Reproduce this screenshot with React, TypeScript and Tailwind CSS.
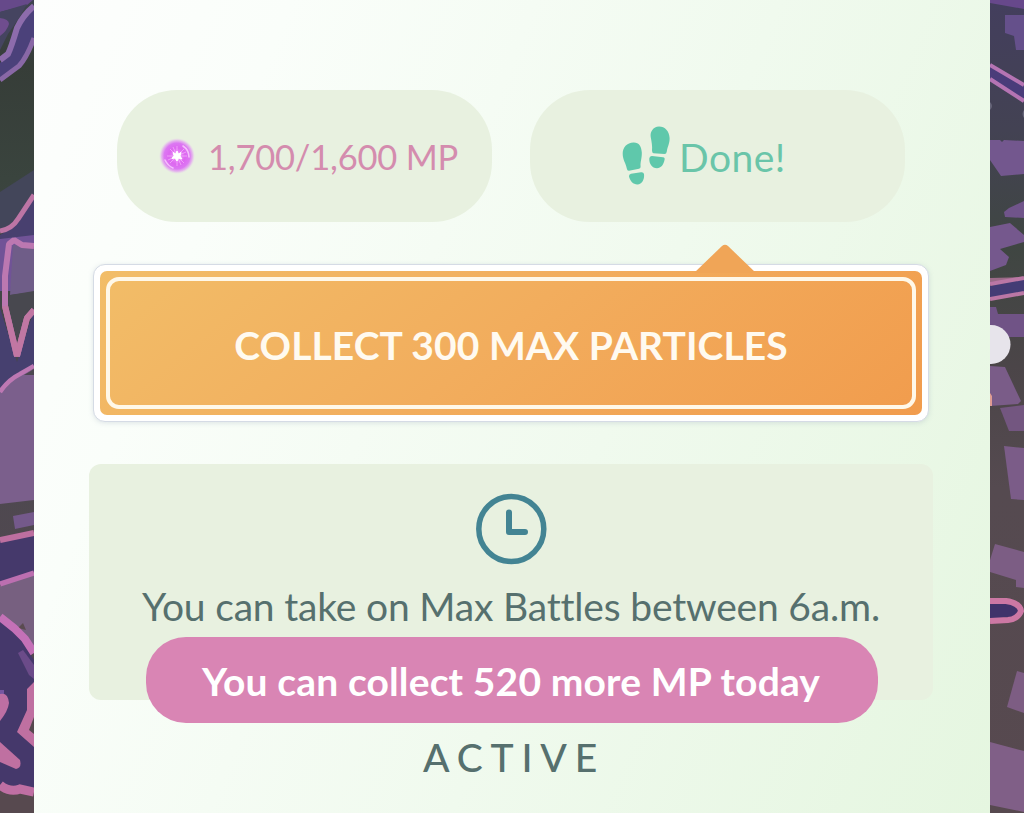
function MapLeft() {
  return (
    <svg className="h-full w-[34px] shrink-0" viewBox="0 0 34 813" preserveAspectRatio="none">
      <defs>
        <linearGradient id="ground" x1="0" y1="0" x2="0" y2="1">
          <stop offset="0" stopColor="#3f4450" />
          <stop offset="0.08" stopColor="#363d38" />
          <stop offset="0.22" stopColor="#3a443e" />
          <stop offset="0.5" stopColor="#4c4850" />
          <stop offset="1" stopColor="#57494f" />
        </linearGradient>
      </defs>
      <rect width="34" height="813" fill="url(#ground)" />
      <path d="M0 0H33L27 5L0 12Z" fill="#66498a" />
      <path d="M0 12L27 4L19 18L8 34L0 50Z" fill="#454460" />
      <path d="M0 18Q9 19 9 24Q7 31 0 36Z" fill="#6f4d8e" />
      <path d="M34 8L20 24L12 48L0 63V79L16 69L27 56L34 40Z" fill="#4b417a" />
      <path d="M34 6Q23 15 17 28Q11 48 8 54L0 60" fill="none" stroke="#8d6cac" strokeWidth="6" />
      <path d="M34 38Q27 57 19 66L0 80" fill="none" stroke="#8968a6" strokeWidth="5" />
      <path d="M0 192L34 170V200L10 232H0Z" fill="#43465a" />
      <path d="M34 198L12 228L0 235V245H34Z" fill="#48406f" />
      <path d="M34 195L18 219Q12 229 0 231" fill="none" stroke="#bd75a5" strokeWidth="5" />
      <path d="M0 239L34 235V291H0Z" fill="#715397" />
      <path d="M13 245H34V292L10 295Z" fill="#6f5d88" />
      <path d="M0 308L17 362L34 310V367L0 390Z" fill="#46406f" />
      <path d="M10 295L34 291V310L27 319L18 350L7 308Z" fill="#48484f" />
      <path d="M34 246L22 245L14 240L9 244L5 276L5 306L17 356L27 318L34 310" fill="none" stroke="#bc78b1" strokeWidth="6" strokeLinejoin="bevel" />
      <path d="M5 306L17 356L27 318L34 310" fill="none" stroke="#c177a3" strokeWidth="6" strokeLinejoin="bevel" />
      <path d="M0 390L14 377L34 369V500L0 504Z" fill="#7b5f8c" />
      <path d="M24 375L34 369V375Z" fill="#4c4850" />
      <path d="M0 392Q8 380 20 374L34 366" fill="none" stroke="#bd78b3" strokeWidth="4.5" />
      <path d="M13 516L34 512V525L15 529Z" fill="#74598b" />
      <path d="M0 541L34 533V572L0 584Z" fill="#45396b" />
      <path d="M0 540L34 533" stroke="#bd6fa0" strokeWidth="6" />
      <path d="M0 586L34 574V650L0 618Z" fill="#776080" />
      <path d="M18 628L23 623L26 630Z" fill="#5a4b50" />
      <path d="M0 620L18 635L34 660V789L0 784Z" fill="#45386b" />
      <path d="M0 584L34 573" stroke="#bc6fb0" strokeWidth="5" />
      <path d="M0 617L14 628L25 639L34 653" fill="none" stroke="#c471b7" strokeWidth="8" />
      <path d="M18 653L23 650L34 665V679L29 675Z" fill="#6b4b89" />
      <path d="M0 690H4V696H0Z" fill="#7556a1" />
      <path d="M0 694Q8 692 9 703Q8 711 0 721Z" fill="#bd6fa3" />
      <path d="M34 682L27 689V710L17 732L34 747Z" fill="#bf70a1" />
      <path d="M34 717L29 730L34 734Z" fill="#57494f" />
      <path d="M0 742L20 760Q22 768 16 769L0 762Z" fill="#bf70a1" />
      <path d="M0 791H34V813H0Z" fill="#57494f" />
      <path d="M0 785Q10 793 20 789L34 792" fill="none" stroke="#bf6fa3" strokeWidth="9" />
    </svg>
  );
}

function MapRight() {
  return (
    <svg className="h-full w-[34px] shrink-0" viewBox="0 0 34 813" preserveAspectRatio="none">
      <defs>
        <linearGradient id="soil" x1="0" y1="0" x2="0" y2="1">
          <stop offset="0" stopColor="#433e5d" />
          <stop offset="0.16" stopColor="#434253" />
          <stop offset="0.3" stopColor="#3f4642" />
          <stop offset="0.45" stopColor="#4b4548" />
          <stop offset="0.6" stopColor="#554a50" />
          <stop offset="1" stopColor="#57494f" />
        </linearGradient>
      </defs>
      <rect width="34" height="813" fill="url(#soil)" />
      <path d="M0 0H34V9L0 3Z" fill="#67488b" />
      <path d="M15 15H34V50H26L24 36L15 33Z" fill="#65508b" />
      <path d="M0 64L34 86V100L0 80Z" fill="#4a3c7a" />
      <path d="M0 65L34 85M0 79L34 101" stroke="#b574b3" strokeWidth="4" />
      <path d="M0 102Q4 106 0 110ZM34 110Q31 114 34 118Z" fill="#666579" />
      <path d="M0 140H10L12 142L14 140L34 141V174L11 176L0 160Z" fill="#73578e" />
      <path d="M14 212L19 208L34 201V218L15 217Z" fill="#70548a" />
      <path d="M0 227L20 223L34 235V242L10 249L19 257L16 265L0 271Z" fill="#75588d" />
      <path d="M0 278L34 277V281L0 282Z" fill="#9a6a87" />
      <path d="M0 286L34 279V294L0 299Z" fill="#443c75" />
      <path d="M0 284L34 278M0 299L34 293" stroke="#bb77a5" strokeWidth="4" />
      <path d="M0 307H6L8 314H34V337H0Z" fill="#705386" />
      <circle cx="1" cy="344.5" r="19.5" fill="#e7e4eb" />
      <path d="M0 366L15 367L31 401L28 404L0 406Z" fill="#7a5c88" />
      <path d="M0 393L2 396V406H0Z" fill="#df9c93" />
      <path d="M10 408L34 405V431H19Z" fill="#735680" />
      <path d="M14 446L34 448V500L21 499Z" fill="#7b5c88" />
      <path d="M5 544L34 552V588L26 587V580L0 572V560Z" fill="#7c5d84" />
      <path d="M0 601H16Q29 603 28 611Q28 617 20 617L0 619Z" fill="#3f336a" />
      <path d="M0 601H16Q30 603 31 611Q28 619 18 620L0 621" fill="none" stroke="#cc78a4" strokeWidth="6" />
      <path d="M27 671L34 673V713L17 707Z" fill="#7d5d83" />
      <path d="M0 742L34 751V812L0 805Z" fill="#805f87" />
    </svg>
  );
}

function ParticleIcon() {
  return (
    <svg className="size-9 shrink-0" viewBox="0 0 36 36">
      <defs>
        <radialGradient id="orb">
          <stop offset="0" stopColor="#ef9dfb" />
          <stop offset="0.45" stopColor="#dd67f0" />
          <stop offset="0.72" stopColor="#dc78f2" />
          <stop offset="0.86" stopColor="#e3a3f0" stopOpacity="0.75" />
          <stop offset="1" stopColor="#e8d0ec" stopOpacity="0" />
        </radialGradient>
      </defs>
      <circle cx="18" cy="18" r="18" fill="url(#orb)" />
      <path d="M18 8V28M8 18H28M11 11L25 25M25 11L11 25M14 9L22 27M27 14L9 22" stroke="#f3acfa" strokeWidth="0.8" />
      <path d="M24 8Q30 12 30 19M6 22Q9 28 14 30" fill="none" stroke="#f5bffb" strokeWidth="1.6" strokeLinecap="round" />
      <path d="M18 13L19.500 16L22 14.500L21 18L23 21L19.500 20L18 23L16 20L13 20.500L15 17.500L14 14.500L17 16Z" fill="#fff" stroke="#fff" strokeWidth="1" />
    </svg>
  );
}

function Footprints() {
  return (
    <svg className="h-[60px] w-12 shrink-0" viewBox="0 0 48 60" fill="#5fc8ab">
      <path d="M37 0.500C31 1 28 5.500 28.700 11C29.600 16 30.500 20 30 24.500Q30 27 31.500 27.200L42.500 28Q44.500 28 44.800 25.500C45.500 20.500 47.800 17.500 47.600 12C47.200 5 43 0.500 37 0.500Z" />
      <path d="M30 30L41 31.200Q43.200 31.500 42.500 34C41.500 39 39 42 35 42.300C30 42.200 27 37.500 27.300 32.500Q27.500 29.800 30 30Z" />
      <path d="M11.500 16.500C5 16.500 0.500 21.500 0.700 28C0.800 34 4 37.500 4.800 42.500Q5.200 45 7 44.800L17 42.800Q18.800 42.500 18.600 40.500C18.200 35.500 20 32.500 19.800 26.500C19.500 20.500 17 16.300 11.500 16.500Z" />
      <path d="M9 47.800L19 46.200Q21.500 45.800 22 48C22.700 53.500 20 58 15.500 58.500C11.500 58.700 8 55 7 50.500Q6.700 48.200 9 47.800Z" />
    </svg>
  );
}

function ClockIcon() {
  return (
    <svg className="size-[72px]" viewBox="0 0 72 72" fill="none" stroke="#438493">
      <circle cx="36.300" cy="36" r="32.500" strokeWidth="5.500" />
      <path d="M34 19.500V39H50" strokeWidth="6" strokeLinecap="round" strokeLinejoin="round" />
    </svg>
  );
}

export default function App() {
  return (
    <div className="flex h-[813px] w-[1024px] overflow-hidden font-['Lato',sans-serif]">
      <MapLeft />
      <main className="flex w-[956px] shrink-0 flex-col items-center bg-[linear-gradient(112deg,#fdfefd_0%,#fafefa_20%,#f0faee_58%,#e5f6e0_100%)] pt-[90px] pr-[2px]">
        <div className="flex gap-[38px]">
          <div className="flex h-[132px] w-[375px] items-center rounded-[60px] bg-[#e8f1e0] pl-[42px]">
            <ParticleIcon />
            <span className="mt-[2px] ml-[13px] text-[34.500px] leading-none tracking-[-0.2px] whitespace-nowrap text-[#d48cae]">1,700/1,600 MP</span>
          </div>
          <div className="flex h-[132px] w-[375px] items-center rounded-[60px] bg-[#e8f1e0] pl-[92px]">
            <Footprints />
            <span className="mt-[3px] ml-[9px] text-[39px] leading-none tracking-[0.5px] whitespace-nowrap text-[#6ac5a9]">Done!</span>
          </div>
        </div>

        <button className="relative mt-[42px] h-[158px] w-[836px] shrink-0 rounded-xl border border-[#d5dbe5] bg-white p-[6px] shadow-[0_1px_5px_#8b9aae40]">
          <svg className="absolute top-[-21px] left-[600px] h-[29px] w-[62px]" viewBox="0 0 62 29">
            <path d="M0 29L28 2Q31 -0.500 34 2L62 29Z" fill="#f0a557" />
          </svg>
          <span className="flex h-full rounded-[7px] bg-[linear-gradient(140deg,#f2bd68_0%,#f2ad5d_48%,#f19c4d_100%)] p-[6px]">
            <span className="flex w-full items-center justify-center rounded-[13px] border-4 border-[#fff8e9] pt-[5px] text-[39px] font-bold tracking-[0.06px] whitespace-nowrap text-[#fffaf0]">
              COLLECT 300 MAX PARTICLES
            </span>
          </span>
        </button>

        <section className="relative mt-[42px] flex h-[236px] w-[844px] shrink-0 flex-col items-center rounded-xl bg-[#e8f1e0] pt-[29px]">
          <ClockIcon />
          <p className="mt-[16px] text-[39px] leading-[50px] tracking-[-0.18px] whitespace-nowrap text-[#56706e]">You can take on Max Battles between 6a.m.</p>
          <div className="absolute top-[173px] left-[57px] flex h-[86px] w-[732px] items-center justify-center rounded-[40px] bg-[#d985b4] pt-[2px] pr-[2px] text-[39px] font-bold tracking-[0.14px] whitespace-nowrap text-white">
            You can collect 520 more MP today
          </div>
        </section>
        <p className="mt-[32px] pl-[6px] text-[39px] leading-[50px] font-medium tracking-[7.800px] text-[#56706e]">ACTIVE</p>
      </main>
      <MapRight />
    </div>
  );
}
